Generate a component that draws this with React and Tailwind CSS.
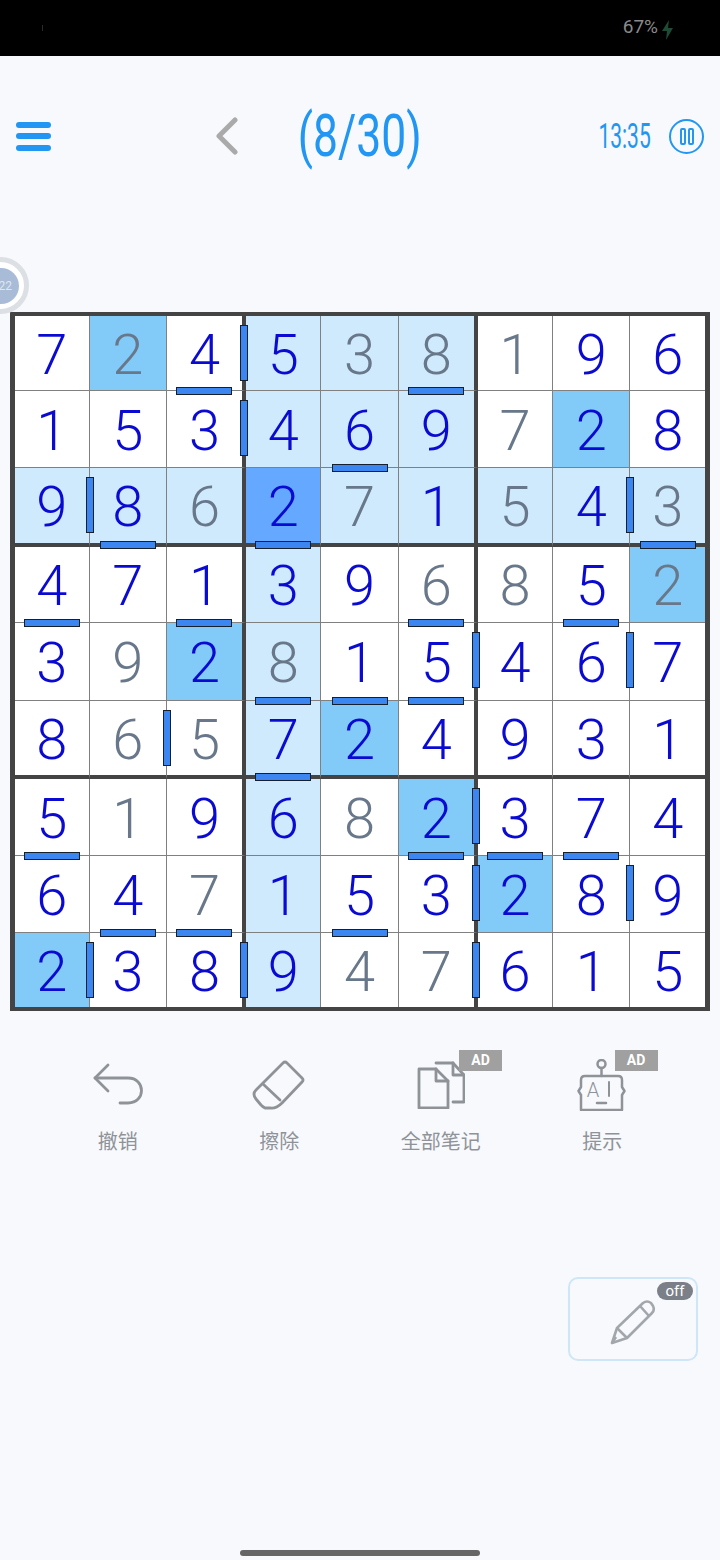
import React from 'react'

// g = gray (given) digit, everything else is the blue player digit
const rows = [
  ['7', 'g2', '4', '5', 'g3', 'g8', 'g1', '9', '6'],
  ['1', '5', '3', '4', '6', '9', 'g7', '2', '8'],
  ['9', '8', 'g6', '2', 'g7', '1', 'g5', '4', 'g3'],
  ['4', '7', '1', '3', '9', 'g6', 'g8', '5', 'g2'],
  ['3', 'g9', '2', 'g8', '1', '5', '4', '6', '7'],
  ['8', 'g6', 'g5', '7', '2', '4', '9', '3', '1'],
  ['5', 'g1', '9', '6', 'g8', '2', '3', '7', '4'],
  ['6', '4', 'g7', '1', '5', '3', '2', '8', '9'],
  ['2', '3', '8', '9', 'g4', 'g7', '6', '1', '5'],
]

const sideBars = ['0-2', '1-2', '2-0', '2-7', '4-5', '4-7', '5-1', '6-5', '7-5', '7-7', '8-0', '8-2', '8-5']
const underBars = ['0-2', '0-5', '1-4', '2-1', '2-3', '2-8', '3-0', '3-2', '3-5', '3-7', '4-3', '4-4', '4-5', '5-3', '6-0', '6-5', '6-6', '6-7', '7-1', '7-2', '7-4']

function cellBg(r, c, digit) {
  if (r === 2 && c === 3) return 'bg-[#64a9ff]'
  if (digit.endsWith('2')) return 'bg-[#82caf7]'
  if (r === 2 || c === 3 || (r < 3 && c > 2 && c < 6)) return 'bg-[#cfeafc]'
  return 'bg-white'
}

function Cell({ r, c, digit }) {
  const key = `${r}-${c}`
  const given = digit.startsWith('g')
  const thickCol = c === 2 || c === 5
  const thickRow = r === 2 || r === 5
  return (
    <div
      className={`relative flex items-center justify-center ${cellBg(r, c, digit)} ${
        c === 8 ? '' : thickCol ? 'border-r-4 border-r-[#444444]' : 'border-r-[1.5px] border-r-[#808080]'
      } ${r === 8 ? '' : thickRow ? 'border-b-4 border-b-[#444444]' : 'border-b-[1.5px] border-b-[#808080]'}`}
    >
      <span className={`text-[56px] leading-none font-light pt-[3px] ${given ? 'text-[#68788a]' : 'text-[#0a0ad2]'}`}>
        {digit.replace('g', '')}
      </span>
      {sideBars.includes(key) && (
        <div className={`absolute z-10 top-[9px] w-[8px] h-[56px] bg-[#3b86f0] border border-[#16202c] ${thickCol ? 'right-[-6px]' : 'right-[-5px]'}`} />
      )}
      {underBars.includes(key) && (
        <div className={`absolute z-10 left-1/2 -translate-x-1/2 w-[56px] h-[8px] bg-[#3b86f0] border border-[#16202c] ${thickRow ? 'bottom-[-6px]' : 'bottom-[-5px]'}`} />
      )}
    </div>
  )
}

function Tool({ label, badgeClass, children }) {
  return (
    <div className="relative flex flex-col items-center">
      <div className="h-[70px] flex items-center justify-center">{children}</div>
      <span className="mt-[8px] text-[20px] leading-[28px] text-[#8f9398]">{label}</span>
      {badgeClass && (
        <span className={`absolute top-0 w-[43px] h-[21px] flex items-center justify-center bg-[#a0a0a0] text-white text-[14px] font-bold ${badgeClass}`}>
          AD
        </span>
      )}
    </div>
  )
}

export default function App() {
  return (
    <div className="relative w-[720px] h-[1560px] overflow-hidden bg-[#f7f9fd] font-['Roboto','Noto_Sans_CJK_SC',sans-serif]">
      <div className="h-14 bg-black flex items-center pr-[46px]">
        <div className="ml-[42px] mr-auto w-px h-[6px] bg-[#2a2a2a]" />
        <span className="text-[19px] text-[#8a8a8a] -mt-[2px]">67%</span>
        <svg width="13" height="20" viewBox="0 0 13 20" className="ml-[3px] mt-[3px]">
          <path d="M8 0 L1 11 H6 L5 20 L12 8 H7 Z" fill="#1f4a35" />
        </svg>
      </div>

      <header className="h-[160px] flex items-center pl-[16px]">
        <div className="w-[35px] flex flex-col gap-[5.5px]">
          <div className="h-[6px] rounded-full bg-[#2196f3]" />
          <div className="h-[6px] rounded-full bg-[#2196f3]" />
          <div className="h-[6px] rounded-full bg-[#2196f3]" />
        </div>
        <svg width="24" height="38" viewBox="0 0 24 38" className="ml-[164px]">
          <path d="M20 3 L4 19 L20 35" fill="none" stroke="#aaaaaa" strokeWidth="5" strokeLinecap="round" strokeLinejoin="round" />
        </svg>
        <div className="ml-[58px] w-[126px] flex justify-center">
          <span className="inline-block scale-x-[0.74] text-[60px] leading-none text-[#2196f3] whitespace-nowrap">(8/30)</span>
        </div>
        <div className="ml-[175px] w-[54px] flex justify-center">
          <span className="inline-block scale-x-[0.6] text-[35px] leading-none text-[#2196f3] whitespace-nowrap">13:35</span>
        </div>
        <div className="ml-[17px] w-[35px] h-[35px] rounded-full border-2 border-[#2196f3] flex items-center justify-center gap-[2px]">
          <div className="w-[6px] h-[17px] rounded-[2px] border-2 border-[#2196f3]" />
          <div className="w-[6px] h-[17px] rounded-[2px] border-2 border-[#2196f3]" />
        </div>
      </header>

      {/* floating level badge, half off the left edge */}
      <div className="absolute left-[-28px] top-[257px] w-[57px] h-[57px] rounded-full border-[5px] border-[#dcdfe3] bg-white flex items-center justify-center">
        <div className="w-[36px] h-[36px] rounded-full bg-[#a8bcd8] flex items-center justify-end pr-[4px]">
          <span className="w-[16px] text-[12px] leading-none text-[#dfe6f0]">22</span>
        </div>
      </div>

      <main className="mt-[96px] mx-[10px] w-[700px] h-[699px] border-x-[5px] border-y-[4px] border-[#444444] grid grid-cols-[74.7px_77.3px_79px_75.5px_77.2px_79px_75.5px_77.3px_1fr] grid-rows-[75px_77px_79px_76px_78px_78px_77px_77px_1fr]">
        {rows.map((row, r) => row.map((digit, c) => <Cell key={`${r}-${c}`} r={r} c={c} digit={digit} />))}
      </main>

      <section className="mt-[39px] px-[37px] grid grid-cols-4">
        <Tool label="撤销">
          <svg width="52" height="44" viewBox="0 0 52 44" fill="none" stroke="#8f9398" strokeWidth="2.8" strokeLinecap="round" strokeLinejoin="round">
            <path d="M16 2 L3 15 L16 28" />
            <path d="M3 15 H36 C54 15 54 40 36 40 H28" />
          </svg>
        </Tool>
        <Tool label="擦除">
          <svg width="54" height="50" viewBox="0 0 54 50" fill="none" stroke="#8f9398" strokeWidth="2.8" strokeLinecap="round" strokeLinejoin="round">
            <path d="M31 3 Q33 1 35 3 L50 18 Q52 20 50 22 L30 43 Q24 49 18 48 H13 Q11 47 9 45 L4 39 Q0 34 4 30 Z" />
            <path d="M11 24 L28 40" />
          </svg>
        </Tool>
        <Tool label="全部笔记" badgeClass="left-[99px]">
          <svg width="48" height="48" viewBox="0 0 48 48" fill="none" stroke="#8f9398" strokeWidth="2.8" strokeLinecap="round" strokeLinejoin="round">
            <path d="M2 8 H19 L31 20 V47 H2 Z" />
            <path d="M19 8 V20 H31" />
            <path d="M19 2 H36 L47 14 V41 H36" />
            <path d="M36 2 V14 H47" />
          </svg>
        </Tool>
        <Tool label="提示" badgeClass="left-[93px]">
          <svg width="50" height="52" viewBox="0 0 50 52" fill="none" stroke="#8f9398" strokeWidth="2.5" strokeLinecap="round" strokeLinejoin="round">
            <circle cx="24.5" cy="5" r="4" />
            <path d="M24.5 9 V17" />
            <path d="M8 17 H41 Q45 17 45 21 V28 L47.5 32 L45 36 V51 H4 V36 L1.5 32 L4 28 V21 Q4 17 8 17 Z" />
            <path d="M20 44 H29" />
            <text x="16" y="38" textAnchor="middle" fontSize="20" fontWeight="300" fill="#8f9398" stroke="none">A</text>
            <path d="M32 23 V37" strokeWidth="2" />
          </svg>
        </Tool>
      </section>

      <div className="mt-[121px] mr-[22px] flex justify-end">
        <button className="relative w-[130px] h-[84px] rounded-[10px] border-2 border-[#cfe6f7] flex items-center justify-center">
          <svg width="46" height="46" viewBox="0 0 46 46" fill="none" stroke="#a3a7ab" strokeWidth="2.6" strokeLinejoin="round" className="mt-[6px]">
            <path d="M2 44 L7 29 L33 4 Q37 1 41 4 L43 7 Q45 11 42 14 L17 39 Z" />
            <path d="M7 29 L17 39 M2 44 L6 38 M30 7 L39 17" />
          </svg>
          <span className="absolute right-[3px] top-[3px] w-[36px] h-[18px] rounded-full bg-[#7b8088] text-white text-[15px] leading-[18px] text-center">off</span>
        </button>
      </div>

      <div className="absolute left-[240px] top-[1550px] w-[240px] h-[6px] rounded-full bg-[#666666]" />
    </div>
  )
}
